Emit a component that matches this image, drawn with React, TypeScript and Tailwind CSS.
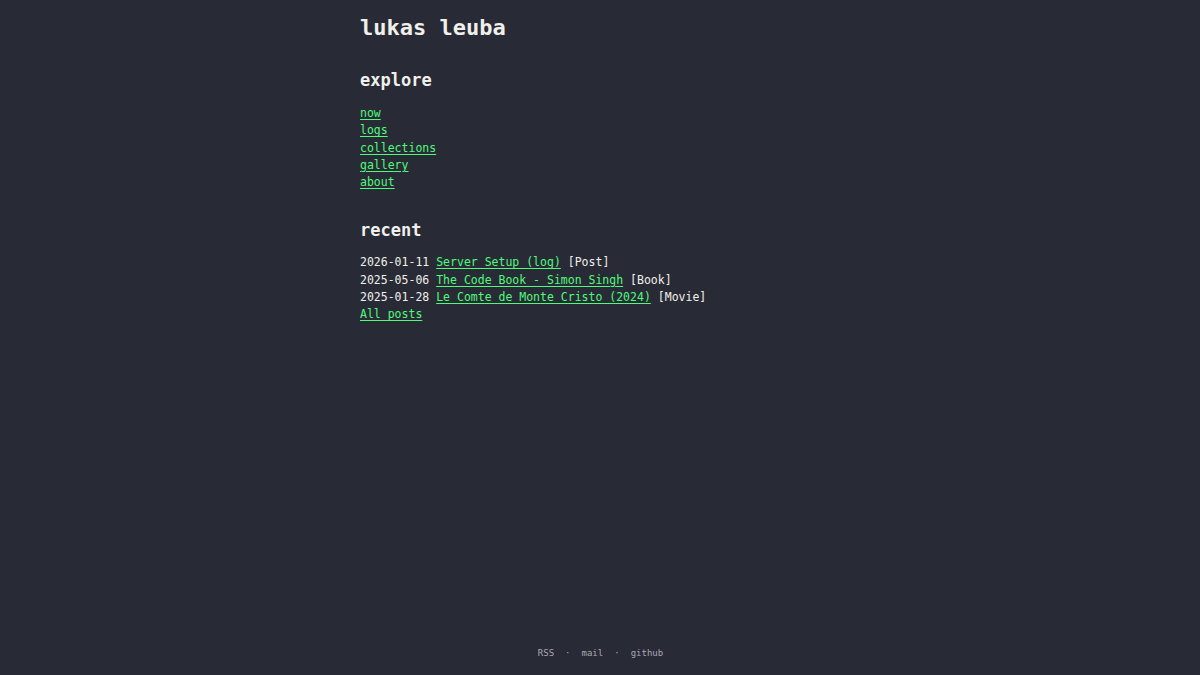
import React from "react";

const mono = { fontFamily: '"DejaVu Sans Mono", monospace' };

export default function App() {
  const nav = ["now", "logs", "collections", "gallery", "about"];
  const recent = [
    { d: "2026-01-11", t: "Server Setup (log)", k: "Post" },
    { d: "2025-05-06", t: "The Code Book - Simon Singh", k: "Book" },
    { d: "2025-01-28", t: "Le Comte de Monte Cristo (2024)", k: "Movie" },
  ];
  return (
    <div
      className="min-h-[675px] bg-[#282a36] text-[#f0f0ea] flex flex-col font-['DejaVu_Sans_Mono',monospace]"
      style={mono}
    >
      <main className="w-[480px] mx-auto flex-1">
        <h1 className="text-[22px] font-bold leading-[28px] mt-[14px]">lukas leuba</h1>
        <h2 className="text-[17px] font-bold leading-[24px] mt-[26px]">explore</h2>
        <ul className="mt-[13px] text-[11.5px] leading-[17.25px]">
          {nav.map((n) => (
            <li key={n}>
              <a href="#" className="text-[#50fa7b] underline underline-offset-[2px]">{n}</a>
            </li>
          ))}
        </ul>
        <h2 className="text-[17px] font-bold leading-[24px] mt-[27px]">recent</h2>
        <ul className="mt-[12px] text-[11.5px] leading-[17.25px]">
          {recent.map((r) => (
            <li key={r.d}>
              {r.d}{" "}
              <a href="#" className="text-[#50fa7b] underline underline-offset-[2px]">{r.t}</a>{" "}
              [{r.k}]
            </li>
          ))}
          <li>
            <a href="#" className="text-[#50fa7b] underline underline-offset-[2px]">All posts</a>
          </li>
        </ul>
      </main>
      <footer className="flex justify-center gap-[11px] text-[9px] text-[#a8a9b4] pb-[15px] ml-[1px]">
        <span>RSS</span>
        <span>·</span>
        <span>mail</span>
        <span>·</span>
        <span>github</span>
      </footer>
    </div>
  );
}
